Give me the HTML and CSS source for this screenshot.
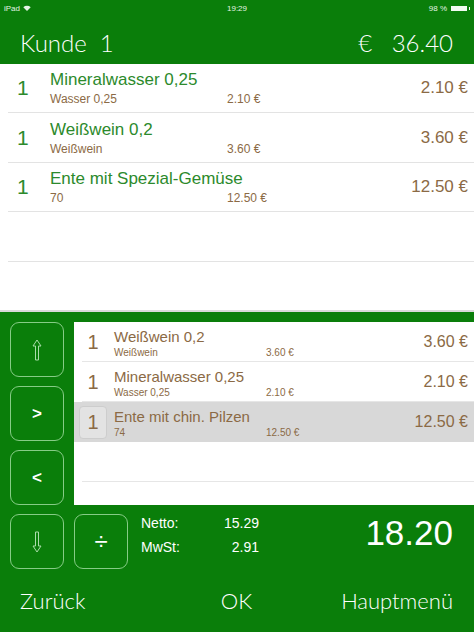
FILE: index.html
```html
<!DOCTYPE html>
<html lang="de">
<head>
  <meta charset="UTF-8" />
  <title>Kasse</title>
  <link rel="stylesheet" href="styles.css">
</head>
<body>

  <div class="top">
    <div class="status">
      <span class="status-left">iPad
        <svg width="8" height="6" viewBox="0 0 8 6"><path d="M4 6 L0.3 2.2 A5.4 5.4 0 0 1 7.7 2.2 Z" fill="#e4f4e4"/></svg>
      </span>
      <span class="status-time">19:29</span>
      <span class="status-right">98 % <span class="battery"></span><span class="battery-nub"></span></span>
    </div>
    <div class="header">
      <span>Kunde&nbsp;&nbsp;1</span>
      <span>€&nbsp;&nbsp;&nbsp;36.40</span>
    </div>
  </div>

  <div class="order-list">
    <div class="item">
      <div class="qty">1</div>
      <div class="info">
        <div class="title">Mineralwasser 0,25</div>
        <div class="sub"><span class="sub-name">Wasser 0,25</span><span>2.10 €</span></div>
      </div>
      <div class="price">2.10 €</div>
    </div>
    <div class="item">
      <div class="qty">1</div>
      <div class="info">
        <div class="title">Weißwein 0,2</div>
        <div class="sub"><span class="sub-name">Weißwein</span><span>3.60 €</span></div>
      </div>
      <div class="price">3.60 €</div>
    </div>
    <div class="item">
      <div class="qty">1</div>
      <div class="info">
        <div class="title">Ente mit Spezial-Gemüse</div>
        <div class="sub"><span class="sub-name">70</span><span>12.50 €</span></div>
      </div>
      <div class="price">12.50 €</div>
    </div>
    <div class="item"></div>
  </div>

  <div class="panel">
    <button class="key key-up">
      <svg width="10" height="22" viewBox="0 0 10 22"><path d="M5 1 L9 7 H6.5 V21 H3.5 V7 H1 Z" fill="none" stroke="#a9dca9" stroke-width="1"/></svg>
    </button>

    <div class="bill">
      <div class="bill-row">
        <div class="bill-qty">1</div>
        <div class="bill-info">
          <div class="bill-title">Weißwein 0,2</div>
          <div class="bill-sub"><span class="bill-sub-name">Weißwein</span><span>3.60 €</span></div>
        </div>
        <div class="bill-price">3.60 €</div>
      </div>
      <div class="bill-row">
        <div class="bill-qty">1</div>
        <div class="bill-info">
          <div class="bill-title">Mineralwasser 0,25</div>
          <div class="bill-sub"><span class="bill-sub-name">Wasser 0,25</span><span>2.10 €</span></div>
        </div>
        <div class="bill-price">2.10 €</div>
      </div>
      <div class="bill-row selected">
        <div class="bill-qty">1</div>
        <div class="bill-info">
          <div class="bill-title">Ente mit chin. Pilzen</div>
          <div class="bill-sub"><span class="bill-sub-name">74</span><span>12.50 €</span></div>
        </div>
        <div class="bill-price">12.50 €</div>
      </div>
      <div class="bill-row"></div>
    </div>

    <button class="key key-text">&gt;</button>
    <button class="key key-text">&lt;</button>
    <button class="key key-down">
      <svg width="10" height="22" viewBox="0 0 10 22"><path d="M5 21 L9 15 H6.5 V1 H3.5 V15 H1 Z" fill="none" stroke="#a9dca9" stroke-width="1"/></svg>
    </button>
    <button class="key key-divide">÷</button>

    <div class="totals">
      <div class="netto">
        <div class="netto-line"><span>Netto:</span><span>15.29</span></div>
        <div class="netto-line"><span>MwSt:</span><span>2.91</span></div>
      </div>
      <div class="total">18.20</div>
    </div>
  </div>

  <div class="nav">
    <span>Zurück</span>
    <span>OK</span>
    <span class="nav-right">Hauptmenü</span>
  </div>

</body>
</html>
```

FILE: styles.css
```css
body {
  margin: 0;
  width: 474px;
  height: 632px;
  background-color: #0a7e0a;
  font-family: "Liberation Sans", Arial, sans-serif;
  overflow: hidden;
}

/* top bar */

.status {
  height: 16px;
  display: flex;
  justify-content: space-between;
  align-items: center;
  padding: 0 4px;
  font-size: 8px;
  color: #e4f4e4;
}

.status-left,
.status-right {
  width: 80px;
  display: flex;
  align-items: center;
  gap: 3px;
}

.status-right {
  justify-content: flex-end;
  gap: 2px;
}

.battery {
  width: 16px;
  height: 5px;
  background: #f2fbf2;
  margin-left: 2px;
}

.battery-nub {
  width: 1px;
  height: 3px;
  background: #f2fbf2;
}

.header {
  height: 48px;
  display: flex;
  justify-content: space-between;
  align-items: center;
  padding: 4px 21px 0 20px;
  box-sizing: border-box;
  font-family: Lato, sans-serif;
  font-weight: 300;
  font-size: 24px;
  color: white;
}

/* customer order list */

.order-list {
  height: 246px;
  background: white;
  border-bottom: 2px solid #d9d9d9;
}

.item {
  height: 48.4px;
  margin-left: 8px;
  border-bottom: 1px solid #e3e3e3;
  display: flex;
  align-items: center;
}

.qty {
  width: 33px;
  padding-left: 9px;
  font-size: 21px;
  color: #2c8a2c;
}

.info {
  flex: 1;
}

.title {
  font-size: 17px;
  line-height: 20px;
  color: #2c8a2c;
}

.sub {
  display: flex;
  margin-top: 2px;
  font-size: 12px;
  line-height: 14px;
  color: #8b6a45;
}

.sub-name {
  width: 177px;
}

.price {
  padding-right: 6px;
  font-size: 17px;
  color: #8b6a45;
}

/* lower panel */

.panel {
  display: grid;
  grid-template-columns: 54px 54px 1fr;
  grid-template-rows: repeat(4, 55px);
  column-gap: 10px;
  row-gap: 9px;
  padding: 10px 0 0 10px;
}

.key {
  border: 1px solid #86cc86;
  border-radius: 9px;
  background: transparent;
  color: white;
  padding: 0;
  display: flex;
  align-items: center;
  justify-content: center;
  font-family: "Liberation Sans", Arial, sans-serif;
}

.key-text {
  font-size: 17px;
  font-weight: bold;
}

.key-divide {
  font-size: 24px;
  grid-column: 2;
  grid-row: 4;
}

.key-down {
  grid-column: 1;
  grid-row: 4;
}

.bill {
  grid-column: 2 / 4;
  grid-row: 1 / 4;
  background: white;
}

.bill-row {
  height: 40px;
  display: flex;
  align-items: center;
  background: linear-gradient(#e6e6e6, #e6e6e6) no-repeat 8px 100% / calc(100% - 8px) 1px;
}

.bill-row.selected {
  background: #d8d8d8;
}

.bill-qty {
  width: 28px;
  height: 33px;
  margin-left: 5px;
  box-sizing: border-box;
  display: flex;
  align-items: center;
  justify-content: center;
  font-size: 20px;
  color: #8b6a45;
}

.selected .bill-qty {
  background: #e3e3e3;
  border: 1px solid #cdcdcd;
  border-radius: 4px;
}

.bill-info {
  flex: 1;
  margin-left: 7px;
  padding-top: 2px;
}

.bill-title {
  font-size: 15px;
  line-height: 17px;
  color: #8b6a45;
}

.bill-sub {
  display: flex;
  margin-top: 2px;
  font-size: 10px;
  line-height: 12px;
  color: #8b6a45;
}

.bill-sub-name {
  width: 152px;
}

.bill-price {
  padding-right: 6px;
  font-size: 16px;
  color: #8b6a45;
}

.totals {
  grid-column: 3;
  grid-row: 4;
  display: flex;
  justify-content: space-between;
  padding-right: 21px;
  color: white;
}

.netto {
  width: 121px;
  margin-top: -3px;
}

.netto-line {
  display: flex;
  justify-content: space-between;
  padding-left: 3px;
  font-size: 14px;
  line-height: 24px;
}

.total {
  font-size: 35px;
  line-height: 35px;
  padding-top: 1px;
}

/* bottom navigation */

.nav {
  height: 63px;
  display: grid;
  grid-template-columns: 1fr auto 1fr;
  align-items: center;
  padding: 0 21px 0 20px;
  font-family: Lato, sans-serif;
  font-weight: 300;
  font-size: 22px;
  color: white;
}

.nav-right {
  justify-self: end;
}
```
